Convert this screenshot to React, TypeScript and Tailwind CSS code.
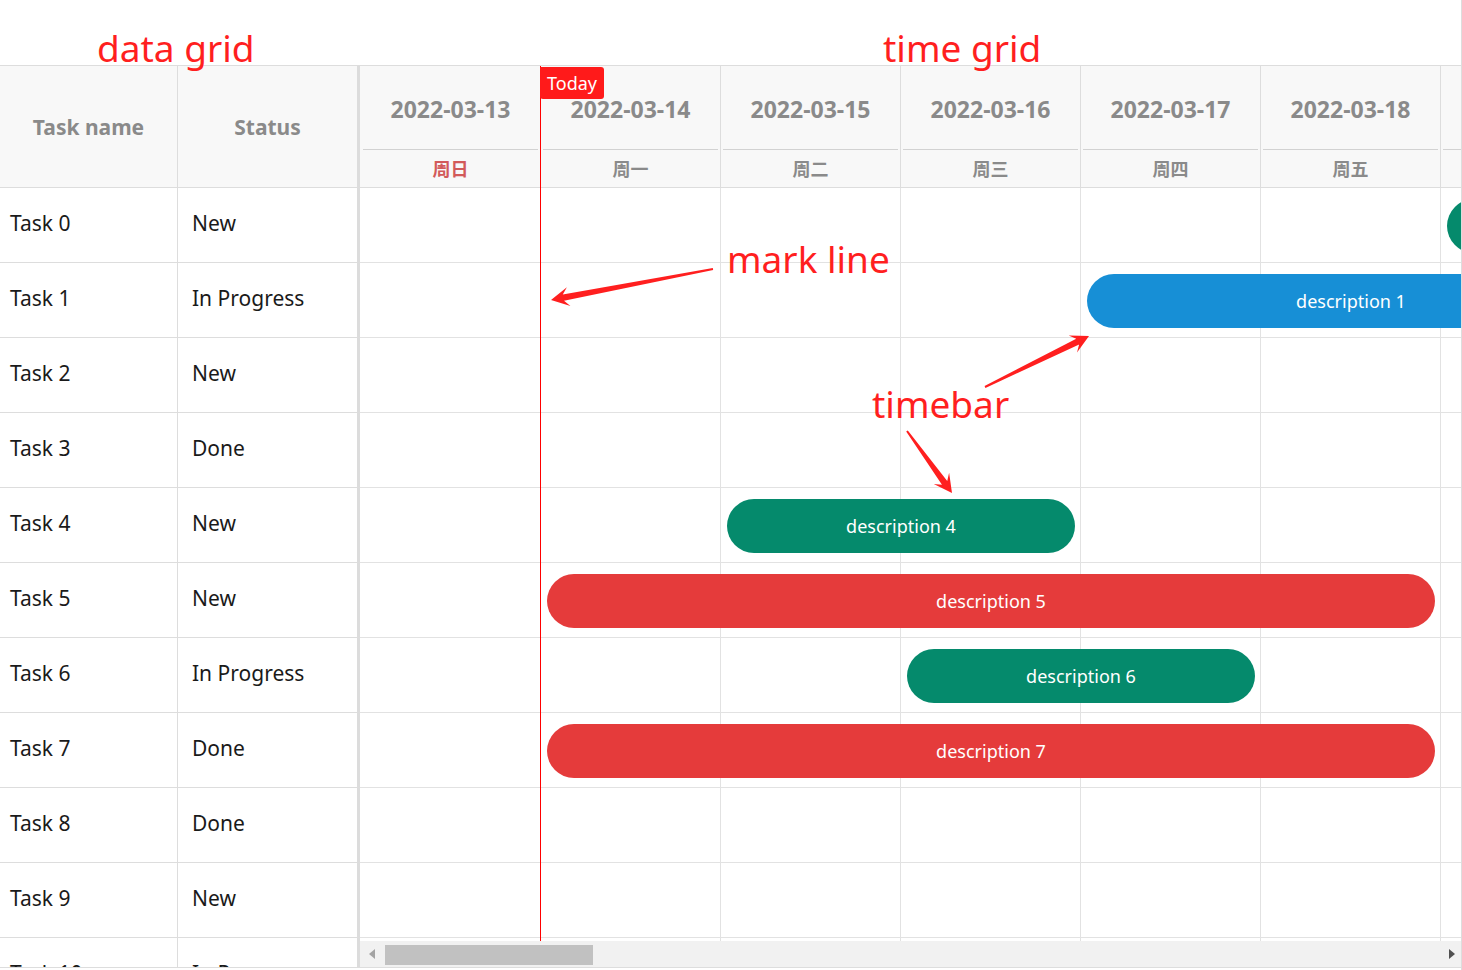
import React from 'react'

type Task = { name: string; status: string }
type Bar = { row: number; start: number; days: number; color: string; label: string }

const tasks: Task[] = [
  { name: 'Task 0', status: 'New' },
  { name: 'Task 1', status: 'In Progress' },
  { name: 'Task 2', status: 'New' },
  { name: 'Task 3', status: 'Done' },
  { name: 'Task 4', status: 'New' },
  { name: 'Task 5', status: 'New' },
  { name: 'Task 6', status: 'In Progress' },
  { name: 'Task 7', status: 'Done' },
  { name: 'Task 8', status: 'Done' },
  { name: 'Task 9', status: 'New' },
  { name: 'Task 10', status: 'In Progress' },
]

const days = [
  { date: '2022-03-13', week: '周日', weekend: true },
  { date: '2022-03-14', week: '周一' },
  { date: '2022-03-15', week: '周二' },
  { date: '2022-03-16', week: '周三' },
  { date: '2022-03-17', week: '周四' },
  { date: '2022-03-18', week: '周五' },
  { date: '2022-03-19', week: '周六', weekend: true },
]

const bars: Bar[] = [
  { row: 0, start: 6, days: 2, color: '#058a6c', label: 'description 0' },
  { row: 1, start: 4, days: 3, color: '#178fd6', label: 'description 1' },
  { row: 4, start: 2, days: 2, color: '#058a6c', label: 'description 4' },
  { row: 5, start: 1, days: 5, color: '#e53b3b', label: 'description 5' },
  { row: 6, start: 3, days: 2, color: '#058a6c', label: 'description 6' },
  { row: 7, start: 1, days: 5, color: '#e53b3b', label: 'description 7' },
]

const COL = 180
const ROW = 75

// tapered annotation arrow, tail -> tip
function arrow(x1: number, y1: number, x2: number, y2: number, head = 18, headW = 19, neckW = 6.5) {
  const len = Math.hypot(x2 - x1, y2 - y1)
  const ux = (x2 - x1) / len
  const uy = (y2 - y1) / len
  const px = -uy
  const py = ux
  const nx = x2 - ux * head * 0.7
  const ny = y2 - uy * head * 0.7
  const bx = x2 - ux * head
  const by = y2 - uy * head
  const pts = [
    [x1 + px * 1, y1 + py * 1],
    [nx + (px * neckW) / 2, ny + (py * neckW) / 2],
    [bx + (px * headW) / 2, by + (py * headW) / 2],
    [x2, y2],
    [bx - (px * headW) / 2, by - (py * headW) / 2],
    [nx - (px * neckW) / 2, ny - (py * neckW) / 2],
    [x1 - px * 1, y1 - py * 1],
  ]
  return pts.map((p) => p.join(',')).join(' ')
}

function DataGrid() {
  return (
    <div className="w-[357px] shrink-0 flex flex-col">
      {/* header */}
      <div className="h-[122px] shrink-0 flex border-b border-[#dddddd] bg-[#f8f8f8] text-[21px] font-bold text-[#8a8a8a]">
        <div className="w-[178px] shrink-0 border-r border-[#dddddd] flex items-center justify-center pt-[2px]">Task name</div>
        <div className="flex-1 flex items-center justify-center pt-[2px]">Status</div>
      </div>
      {/* rows */}
      <div className="flex-1 min-h-0 overflow-hidden">
        {tasks.map((t) => (
          <div key={t.name} className="h-[75px] flex border-b border-[#dddddd] text-[21px] text-[#1a1a1a]">
            <div className="w-[178px] shrink-0 border-r border-[#dddddd] flex items-center pl-[10px] pb-[3px]">{t.name}</div>
            <div className="flex-1 flex items-center pl-[14px] pb-[3px]">{t.status}</div>
          </div>
        ))}
      </div>
    </div>
  )
}

function TimeGrid() {
  return (
    <div className="relative flex-1 min-w-0 flex flex-col overflow-hidden">
      {/* header */}
      <div className="h-[122px] shrink-0 flex pl-px border-b border-[#dddddd] bg-[#f8f8f8] font-bold text-[#8a8a8a]">
        {days.map((d) => (
          <div key={d.date} className="w-[180px] shrink-0 border-r border-[#dddddd] flex flex-col">
            <div className="h-[84px] mx-[2px] pt-[4px] border-b border-[#d2d2d2] flex items-center justify-center text-[23px]">
              {d.date}
            </div>
            <div className={'flex-1 flex items-center justify-center pt-px text-[18px] ' + (d.weekend ? 'text-[#d25a5a]' : '')}>
              {d.week}
            </div>
          </div>
        ))}
      </div>

      {/* body */}
      <div className="relative flex-1 min-h-0 overflow-hidden">
        {tasks.map((t) => (
          <div key={t.name} className="h-[75px] flex pl-px border-b border-[#e2e2e2]">
            {days.map((d) => (
              <div key={d.date} className="w-[180px] shrink-0 h-full border-r border-[#e2e2e2]" />
            ))}
          </div>
        ))}
        {bars.map((b) => (
          <div
            key={b.label}
            className="absolute h-[54px] rounded-full flex items-center justify-center text-white text-[18px]"
            style={{ top: b.row * ROW + 11, left: 1 + b.start * COL + 6, width: b.days * COL - 12, background: b.color }}
          >
            {b.label}
          </div>
        ))}
      </div>

      {/* horizontal scrollbar */}
      <div className="h-[26px] shrink-0 bg-[#f1f1f1] flex items-center">
        <svg width="25" height="26" viewBox="0 0 25 26" className="shrink-0">
          <polygon points="9,13 15,8 15,18" fill="#a3a3a3" />
        </svg>
        <div className="w-[208px] h-[20px] mt-[1px] bg-[#c1c1c1]" />
        <div className="flex-1" />
        <svg width="20" height="26" viewBox="0 0 20 26" className="shrink-0">
          <polygon points="8,8 14,13 8,18" fill="#505050" />
        </svg>
      </div>

      {/* today mark line */}
      <div className="absolute left-[180px] top-0 bottom-[26px] w-px bg-[#ff0000]" />
      <div className="absolute left-[180px] top-px w-[64px] h-[32px] bg-[#ff1a1a] rounded-r-[3px] rounded-bl-[3px] flex items-center justify-center text-white text-[18px]">
        Today
      </div>
    </div>
  )
}

export default function App() {
  return (
    <div className="relative w-[1462px] h-[970px] overflow-hidden bg-white border-r border-[#dddddd] font-['Noto_Sans','Noto_Sans_CJK_SC',sans-serif]">
      <div className="h-[65px]" />
      <div className="h-[903px] flex border-y border-[#dddddd]">
        <DataGrid />
        <div className="w-[3px] shrink-0 bg-[#dcdcdc]" />
        <TimeGrid />
      </div>

      {/* annotations */}
      <div className="absolute left-[97px] top-[29px] text-[37px] leading-none text-[#ff1f1f]">data grid</div>
      <div className="absolute left-[883px] top-[29px] text-[37px] leading-none text-[#ff1f1f]">time grid</div>
      <div className="absolute left-[727px] top-[240px] text-[37px] leading-none text-[#ff1f1f]">mark line</div>
      <div className="absolute left-[872px] top-[385px] text-[37px] leading-none text-[#ff1f1f]">timebar</div>
      <svg className="absolute inset-0 pointer-events-none" width="1462" height="970">
        <polygon points={arrow(713, 269, 551, 300)} fill="#ff1f1f" />
        <polygon points={arrow(985, 387, 1089, 336)} fill="#ff1f1f" />
        <polygon points={arrow(907, 431, 952, 493)} fill="#ff1f1f" />
      </svg>
    </div>
  )
}
